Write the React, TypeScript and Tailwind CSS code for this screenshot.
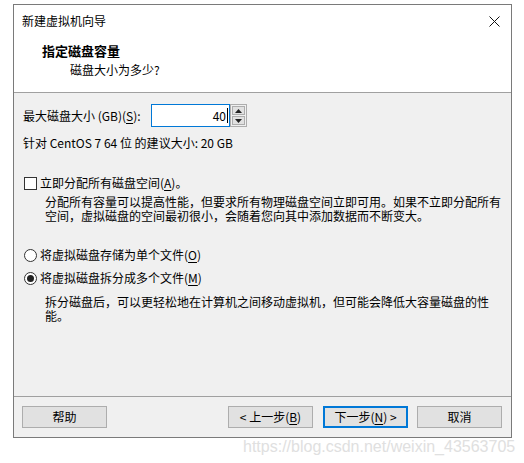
import React from "react";

const font = {
  fontFamily: '"Noto Sans CJK SC", "Noto Sans", sans-serif',
};

const tightFont = {
  fontFamily: '"Liberation Sans", "Noto Sans CJK SC", sans-serif',
};

function U({ children }: { children: React.ReactNode }) {
  return <span className="underline underline-offset-[2px]">{children}</span>;
}

function Btn({
  children,
  primary,
}: {
  children: React.ReactNode;
  primary?: boolean;
}) {
  return (
    <div
      className={
        "w-[85px] h-[22px] flex items-center justify-center bg-[#e1e1e1] text-[12px] leading-[16px] text-black " +
        (primary ? "border-2 border-[#0078d7]" : "border border-[#adadad]")
      }
    >
      {children}
    </div>
  );
}

export default function App() {
  return (
    <div
      className="w-[524px] h-[463px] bg-white relative overflow-hidden pt-[4px] text-black"
      style={font}
    >
      <div className="ml-[13px] w-[499px] h-[434px] border border-[#7a7a7a] bg-[#f0f0f0] flex flex-col">
        {/* header */}
        <div className="h-[88px] shrink-0 bg-white border-b border-[#a0a0a0] flex flex-col">
          <div className="flex items-center justify-between pt-[8px] pl-[8px] pr-[11px]">
            <div className="text-[12px] leading-[16px]">新建虚拟机向导</div>
            <svg width="11" height="11" viewBox="0 0 11 11">
              <path d="M0.5 0.5 L10.5 10.5 M10.5 0.5 L0.5 10.5" stroke="#111" strokeWidth="1" />
            </svg>
          </div>
          <div className="pl-[28px] mt-[13px] text-[13px] leading-[17px] font-bold">
            指定磁盘容量
          </div>
          <div className="pl-[56px] mt-[3px] text-[12px] leading-[16px]">
            磁盘大小为多少?
          </div>
        </div>

        {/* body */}
        <div className="flex-1 pl-[9px] flex flex-col text-[12px]">
          <div className="flex items-center mt-[11px] h-[23px]">
            <div className="w-[128px] leading-[16px] whitespace-nowrap">
              最大磁盘大小 (GB)(<U>S</U>):
            </div>
            <div className="w-[79px] h-[23px] bg-white border border-[#0078d7] flex items-center justify-end pr-[1px] leading-[16px]">
              <span>40</span>
              <span className="w-[1px] h-[15px] bg-black ml-[1px]" />
            </div>
            <div className="w-[17px] h-[23px] border border-[#adadad] bg-[#f0f0f0] flex flex-col p-[1px] gap-[1px]">
              <div className="flex-1 bg-[#e1e1e1] border border-[#adadad] flex items-center justify-center">
                <svg width="7" height="4" viewBox="0 0 7 4">
                  <path d="M0 4 L3.5 0 L7 4 Z" fill="#222" />
                </svg>
              </div>
              <div className="flex-1 bg-[#e1e1e1] border border-[#adadad] flex items-center justify-center">
                <svg width="7" height="4" viewBox="0 0 7 4">
                  <path d="M0 0 L3.5 4 L7 0 Z" fill="#222" />
                </svg>
              </div>
            </div>
          </div>

          <div className="mt-[8px] leading-[16px] whitespace-nowrap">
            针对 CentOS 7 64 位 的建议大小: 20 GB
          </div>

          <div className="mt-[24px] flex items-center h-[16px] pl-[1px]">
            <div className="w-[13px] h-[13px] border border-[#333] bg-white" />
            <div className="ml-[3px] leading-[16px] whitespace-nowrap">
              立即分配所有磁盘空间(<U>A</U>)。
            </div>
          </div>
          <p
            className="mt-[5px] pl-[22px] leading-[14px] whitespace-nowrap"
            style={tightFont}
          >
            分配所有容量可以提高性能，但要求所有物理磁盘空间立即可用。如果不立即分配所有
            <br />
            空间，虚拟磁盘的空间最初很小，会随着您向其中添加数据而不断变大。
          </p>

          <div className="mt-[23px] flex items-center h-[16px] pl-[1px]">
            <div className="w-[13px] h-[13px] rounded-full border border-[#333] bg-white" />
            <div className="ml-[3px] leading-[16px] whitespace-nowrap">
              将虚拟磁盘存储为单个文件(<U>O</U>)
            </div>
          </div>
          <div className="mt-[7px] flex items-center h-[16px] pl-[1px]">
            <div className="w-[13px] h-[13px] rounded-full border border-[#333] bg-white flex items-center justify-center">
              <div className="w-[7px] h-[7px] rounded-full bg-[#222]" />
            </div>
            <div className="ml-[3px] leading-[16px] whitespace-nowrap">
              将虚拟磁盘拆分成多个文件(<U>M</U>)
            </div>
          </div>
          <p
            className="mt-[10px] pl-[22px] leading-[14px] whitespace-nowrap"
            style={tightFont}
          >
            拆分磁盘后，可以更轻松地在计算机之间移动虚拟机，但可能会降低大容量磁盘的性
            <br />
            能。
          </p>
        </div>

        {/* footer */}
        <div className="h-[41px] shrink-0 border-t border-[#a0a0a0] flex items-start pt-[9px] pl-[8px] pr-[9px]">
          <Btn>帮助</Btn>
          <div className="flex-1" />
          <Btn>&lt; 上一步(<U>B</U>)</Btn>
          <div className="w-[10px]" />
          <Btn primary>下一步(<U>N</U>) &gt;</Btn>
          <div className="w-[9px]" />
          <Btn>取消</Btn>
        </div>
      </div>

      <div
        className="absolute left-[243px] top-[437px] text-[16px] leading-[20px] text-[#e0e0e0] whitespace-nowrap"
        style={{ fontFamily: '"Liberation Sans", Arial, sans-serif' }}
      >
        https://blog.csdn.net/weixin_43563705
      </div>
    </div>
  );
}
